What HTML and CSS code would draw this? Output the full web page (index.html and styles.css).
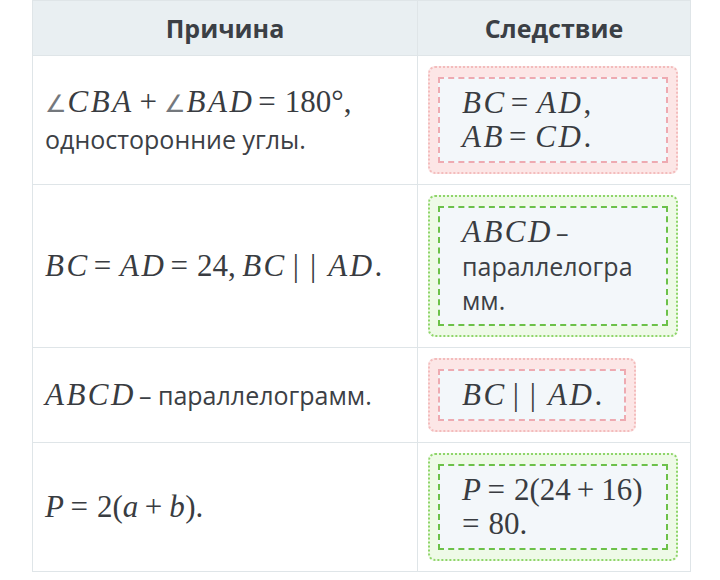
FILE: index.html
```html
<!DOCTYPE html>
<html lang="ru">
<head>
<meta charset="utf-8">
<title>Причина и следствие</title>
<link rel="stylesheet" href="styles.css">
</head>
<body>
<div class="page">
<table class="tbl">
  <colgroup><col class="c1"><col class="c2"></colgroup>
  <thead>
    <tr><th>Причина</th><th>Следствие</th></tr>
  </thead>
  <tbody>
    <tr class="r1">
      <td class="cause"><span class="m"><span class="ang">∠</span><i>CBA</i><span class="bin">+</span><span class="ang">∠</span><i>BAD</i><span class="rel">=</span>180°,</span><br>односторонние углы.</td>
      <td class="res"><div class="box red wide"><div class="inner"><span class="m"><i>BC</i><span class="rel">=</span><i>AD</i>,</span><br><span class="m"><i>AB</i><span class="rel">=</span><i>CD</i>.</span></div></div></td>
    </tr>
    <tr class="r2">
      <td class="cause"><span class="m"><i>BC</i><span class="rel">=</span><i>AD</i><span class="rel">=</span>24,</span> <span class="m"><i>BC</i><span class="par">|</span><span class="par">|</span><i>AD</i>.</span></td>
      <td class="res"><div class="box green wide"><div class="inner"><span class="m"><i>ABCD</i></span><span class="dash">–</span><br>параллелогра<br>мм.</div></div></td>
    </tr>
    <tr class="r3">
      <td class="cause"><span class="m"><i>ABCD</i></span><span class="dash">–</span> параллелограмм.</td>
      <td class="res"><div class="box red"><div class="inner"><span class="m"><i>BC</i><span class="par">|</span><span class="par">|</span><i>AD</i>.</span></div></div></td>
    </tr>
    <tr class="r4">
      <td class="cause"><span class="m"><i>P</i><span class="rel">=</span>2(<i class="lc">a</i><span class="bin">+</span><i class="lc">b</i>).</span></td>
      <td class="res"><div class="box green wide"><div class="inner"><span class="m"><i>P</i><span class="rel">=</span>2(24<span class="bin">+</span>16)</span><br><span class="m"><span class="rel first">=</span>80.</span></div></div></td>
    </tr>
  </tbody>
</table>
</div>
</body>
</html>
```

FILE: styles.css
```css
html, body {
  margin: 0;
  padding: 0;
  background: #ffffff;
}
body {
  font-family: "Open Sans", "Noto Sans", sans-serif;
  color: #3c4045;
}
.page {
  padding: 0 0 0 32px;
}
.tbl {
  border-collapse: collapse;
  width: 658px;
  table-layout: fixed;
}
.c1 { width: 385px; }
.c2 { width: 273px; }
.tbl th, .tbl td {
  border: 1px solid #dfe5e8;
}
.tbl th {
  height: 54px;
  padding: 0;
  background: #e9eff2;
  font-size: 25px;
  font-weight: 700;
  color: #3b3f45;
  text-align: center;
  vertical-align: middle;
}
.tbl td {
  vertical-align: middle;
  padding: 10px 12px 10px 10px;
}
.cause {
  font-size: 25px;
  line-height: 35px;
  padding-left: 12px !important;
}
.res {
  font-size: 25px;
}
.m {
  font-family: "Liberation Serif", "Times New Roman", serif;
  font-size: 31px;
  color: #393c41;
  white-space: nowrap;
}
.m i {
  font-style: italic;
  letter-spacing: 2.5px;
}
.m i.lc {
  letter-spacing: 0.5px;
}
.ang {
  font-family: "DejaVu Sans", sans-serif;
  font-size: 24px;
  color: #74787d;
  margin-right: 1px;
}
.rel {
  margin: 0 9px 0 4px;
}
.rel.first {
  margin-left: 0;
}
.bin {
  margin: 0 7px 0 6px;
}
.par {
  margin: 0 5px 0 6px;
}
.par + .par {
  margin-right: 12px;
}
.dash {
  margin-left: 3px;
}
.box {
  display: inline-block;
  vertical-align: middle;
  border-radius: 7px;
  padding: 9px 8px;
  box-sizing: border-box;
}
.box.wide {
  display: block;
}
.box.red {
  border: 2px dotted #f3bcbc;
  background: #fce6e6;
}
.box.green {
  border: 2px dotted #8fd56a;
  background: #eefae7;
}
.inner {
  background: #f3f7fa;
  padding: 7px 22px;
  line-height: 34px;
}
.red .inner {
  border: 2px dashed #eeaab1;
}
.green .inner {
  border: 2px dashed #6cc149;
}
```
